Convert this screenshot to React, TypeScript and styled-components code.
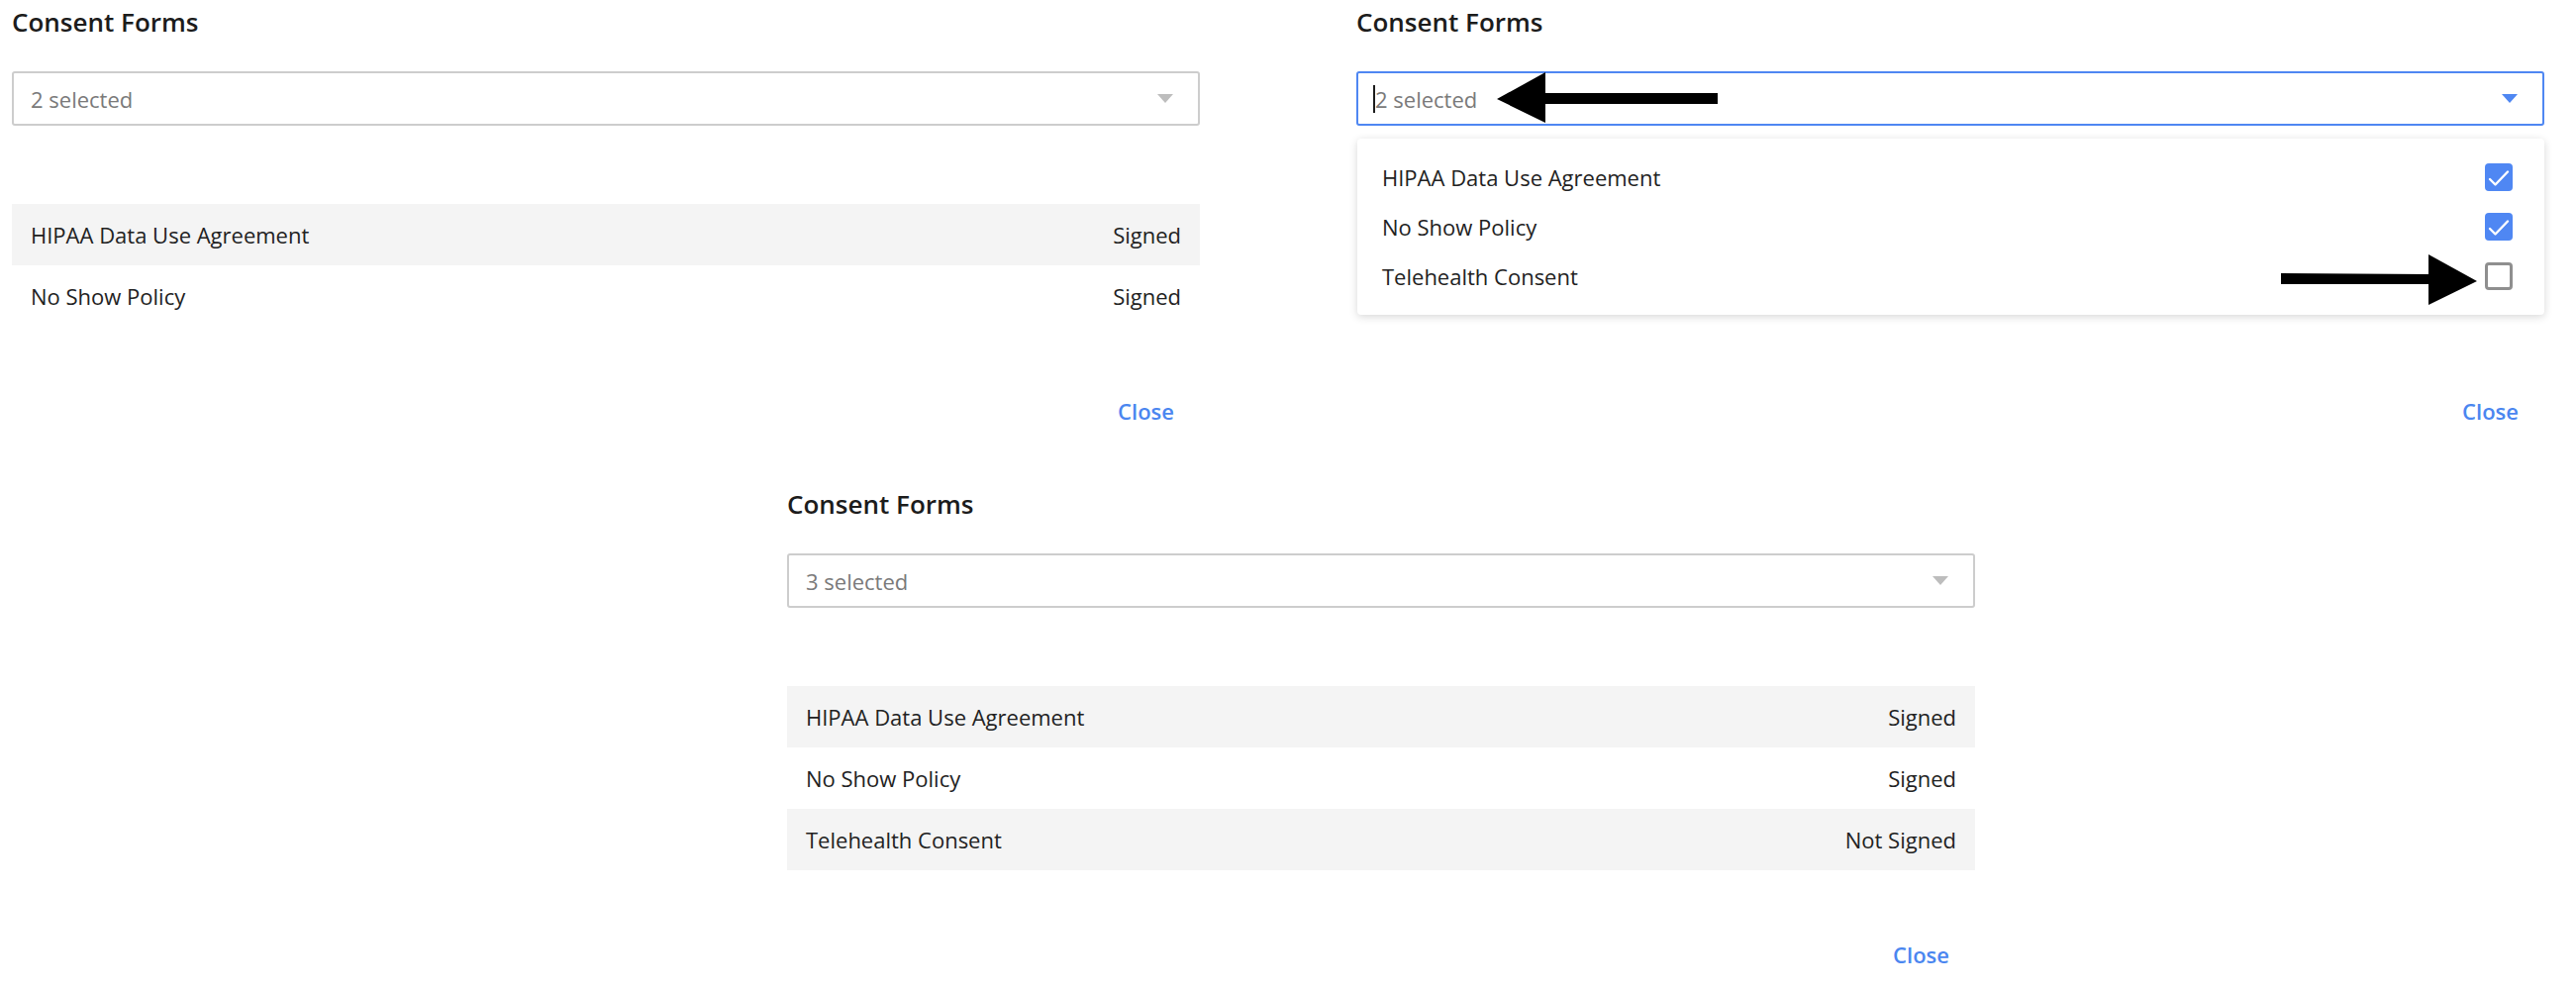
import React from "react";
import styled, { createGlobalStyle } from "styled-components";

const GlobalStyle = createGlobalStyle`
  body {
    margin: 0;
    background: #ffffff;
    font-family: "Open Sans", "Noto Sans", sans-serif;
    color: #222222;
  }
`;

const Page = styled.div`
  width: 2602px;
  height: 1000px;
  overflow: hidden;
  display: flex;
  flex-direction: column;
`;

const TopRow = styled.div`
  display: flex;
  gap: 158px;
  padding-left: 12px;
`;

const BottomRow = styled.div`
  display: flex;
  padding-left: 795px;
  margin-top: 57px;
`;

const Panel = styled.section`
  position: relative;
  width: 1200px;
  display: flex;
  flex-direction: column;
`;

const Title = styled.h2`
  margin: 0;
  font-size: 26px;
  font-weight: 600;
  line-height: 44px;
  color: #1c1c1c;
`;

const SelectBox = styled.div<{ $open?: boolean }>`
  position: relative;
  margin-top: 28px;
  height: 55px;
  box-sizing: border-box;
  border: 2px solid ${p => (p.$open ? "#4f87f2" : "#cdcdcd")};
  border-radius: 3px;
  display: flex;
  align-items: center;
  padding: 0 25px 0 ${p => (p.$open ? "15px" : "17px")};
`;

const SelectValue = styled.span`
  flex: 1;
  display: flex;
  align-items: center;
  font-size: 22px;
  color: #7a7a7a;
`;

const TextCursor = styled.span`
  display: inline-block;
  width: 2px;
  height: 28px;
  background: #1c1c1c;
`;

const Menu = styled.div`
  position: absolute;
  top: calc(100% + 15px);
  left: -1px;
  right: -2px;
  z-index: 2;
  background: #ffffff;
  border-radius: 4px;
  box-shadow: 0 2px 8px rgba(0, 0, 0, 0.16);
  padding: 14px 32px 14px 25px;
`;

const MenuItem = styled.div`
  height: 50px;
  display: flex;
  align-items: center;
  justify-content: space-between;
  font-size: 22px;
  color: #222222;
`;

const Checkbox = styled.span<{ $checked: boolean }>`
  width: 28px;
  height: 28px;
  box-sizing: border-box;
  border-radius: 4px;
  display: flex;
  align-items: center;
  justify-content: center;
  background: ${p => (p.$checked ? "#4f87f3" : "#ffffff")};
  border: ${p => (p.$checked ? "none" : "3px solid #8f8f8f")};
`;

const RowList = styled.div`
  margin-top: 79px;
  min-height: 124px;
  display: flex;
  flex-direction: column;
`;

const Row = styled.div<{ $shaded: boolean }>`
  height: 62px;
  display: flex;
  align-items: center;
  justify-content: space-between;
  padding: 0 19px;
  background: ${p => (p.$shaded ? "#f4f4f4" : "transparent")};
  font-size: 22px;
  color: #222222;
`;

const Footer = styled.div`
  margin-top: 70px;
  height: 30px;
  display: flex;
  justify-content: flex-end;
  padding-right: 26px;
`;

const CloseButton = styled.button`
  border: 0;
  background: none;
  padding: 0;
  font-family: inherit;
  font-size: 22px;
  font-weight: 600;
  line-height: 30px;
  color: #4a86f0;
  cursor: pointer;
`;

const Annotation = styled.svg<{ $left: number; $top: number }>`
  position: absolute;
  left: ${p => p.$left}px;
  top: ${p => p.$top}px;
  z-index: 3;
`;

function DropCaret({ color }: { color: string }) {
  return (
    <svg width="16" height="9" viewBox="0 0 16 9">
      <path d="M0 0 L16 0 L8 9 Z" fill={color} />
    </svg>
  );
}

function CheckMark() {
  return (
    <svg width="28" height="28" viewBox="0 0 28 28">
      <path d="M5 16 L10.5 21.5 L23 8.5" fill="none" stroke="#ffffff" strokeWidth="2.4" strokeLinecap="round" strokeLinejoin="round" />
    </svg>
  );
}

interface FormRow {
  name: string;
  status: string;
}

const allForms = ["HIPAA Data Use Agreement", "No Show Policy", "Telehealth Consent"];

function FormRows({ rows }: { rows: FormRow[] }) {
  return (
    <RowList>
      {rows.map((r, i) => (
        <Row key={r.name} $shaded={i % 2 === 0}>
          <span>{r.name}</span>
          <span>{r.status}</span>
        </Row>
      ))}
    </RowList>
  );
}

function ClosedPanel({ label, rows }: { label: string; rows: FormRow[] }) {
  return (
    <Panel>
      <Title>Consent Forms</Title>
      <SelectBox>
        <SelectValue>{label}</SelectValue>
        <DropCaret color="#bdbdbd" />
      </SelectBox>
      <FormRows rows={rows} />
      <Footer>
        <CloseButton>Close</CloseButton>
      </Footer>
    </Panel>
  );
}

function OpenPanel() {
  const checked = [true, true, false];
  return (
    <Panel>
      <Title>Consent Forms</Title>
      <SelectBox $open>
        <SelectValue>
          <TextCursor />
          2 selected
        </SelectValue>
        <DropCaret color="#4f87f2" />
        <Menu>
          {allForms.map((f, i) => (
            <MenuItem key={f}>
              <span>{f}</span>
              <Checkbox $checked={checked[i]}>{checked[i] && <CheckMark />}</Checkbox>
            </MenuItem>
          ))}
        </Menu>
      </SelectBox>
      <RowList />
      <Footer>
        <CloseButton>Close</CloseButton>
      </Footer>

      <Annotation $left={142} $top={73} width="223" height="51" viewBox="0 0 223 51">
        <polygon points="0,27 49,0 49,21 223,21 223,32 49,32 49,51" fill="#000000" />
      </Annotation>
      <Annotation $left={934} $top={257} width="198" height="52" viewBox="0 0 198 52">
        <polygon points="0,19 149,20 149,0 198,27 149,51 149,30 0,30" fill="#000000" />
      </Annotation>
    </Panel>
  );
}

export default function App() {
  return (
    <>
      <GlobalStyle />
      <Page>
        <TopRow>
          <ClosedPanel
            label="2 selected"
            rows={[
              { name: "HIPAA Data Use Agreement", status: "Signed" },
              { name: "No Show Policy", status: "Signed" },
            ]}
          />
          <OpenPanel />
        </TopRow>
        <BottomRow>
          <ClosedPanel
            label="3 selected"
            rows={[
              { name: "HIPAA Data Use Agreement", status: "Signed" },
              { name: "No Show Policy", status: "Signed" },
              { name: "Telehealth Consent", status: "Not Signed" },
            ]}
          />
        </BottomRow>
      </Page>
    </>
  );
}
